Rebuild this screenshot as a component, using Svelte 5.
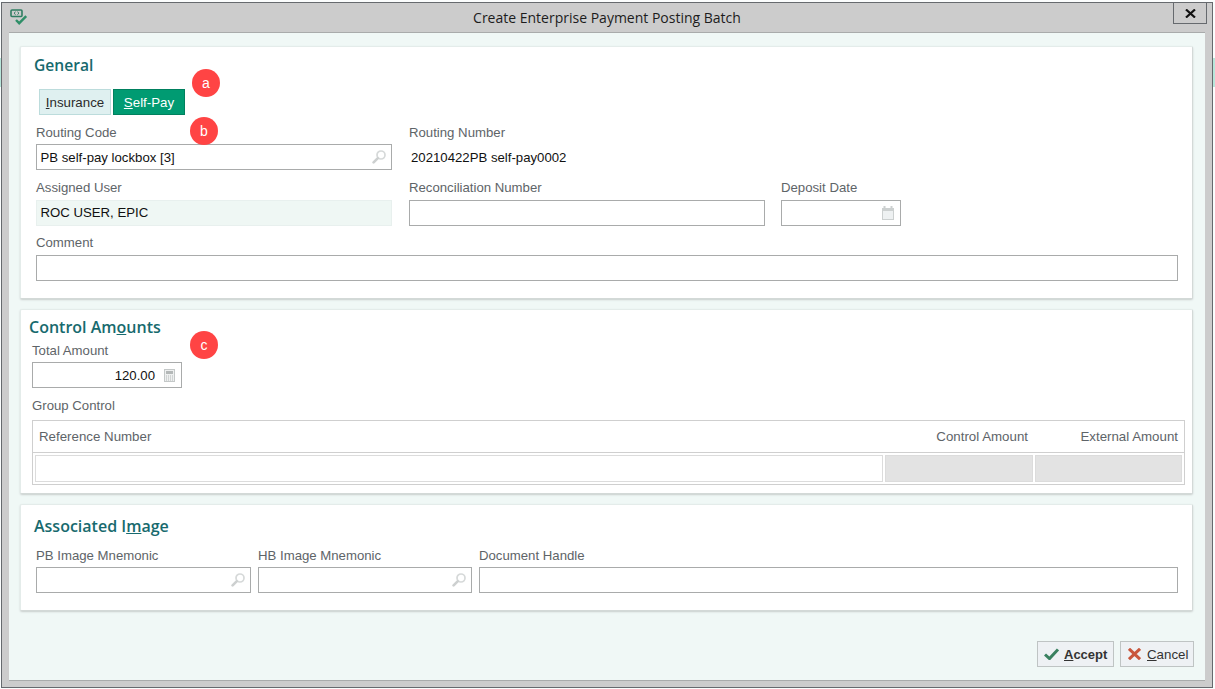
<script>
	const tabs = [
		{ key: 'I', rest: 'nsurance', active: false },
		{ key: 'S', rest: 'elf-Pay', active: true }
	];
</script>

{#snippet searchIcon()}
	<svg class="icon" width="14" height="14" viewBox="0 0 14 14">
		<circle cx="9" cy="5" r="4" fill="none" stroke="#d6d9d9" stroke-width="1.7" />
		<path d="M5.6 8.4 1.6 12.4" stroke="#cdd0d0" stroke-width="2.6" stroke-linecap="round" />
	</svg>
{/snippet}

<div class="backdrop"></div>

<div class="window">
	<header class="titlebar">
		<svg class="app-icon" width="18" height="18" viewBox="0 0 18 18">
			<rect x="1" y="1" width="11" height="6.5" rx="1" fill="none" stroke="#2f7d62" stroke-width="1.6" />
			<path d="M5.6 2.8 4 4.2l1.6 1.5M7.4 2.8 9 4.2 7.4 5.7" fill="none" stroke="#2f7d62" stroke-width="1" />
			<path d="M6 11l3.2 3.2 7-7" fill="none" stroke="#2f8f68" stroke-width="2.4" />
		</svg>
		<span class="title">Create Enterprise Payment Posting Batch</span>
		<button class="close" aria-label="Close">
			<svg width="11" height="9" viewBox="0 0 11 9"><path d="M1 .5 10 8.5M10 .5 1 8.5" stroke="#111" stroke-width="2.2" /></svg>
		</button>
	</header>

	<main class="content">
		<section class="panel general">
			<h2>General</h2>
			<div class="tabs">
				{#each tabs as tab}
					<button class="tab" class:active={tab.active}><u>{tab.key}</u>{tab.rest}</button>
				{/each}
				<span class="badge badge-a">a</span>
			</div>
			<div class="row first">
				<div class="field w356">
					<span class="label">Routing Code</span>
					<div class="input">PB self-pay lockbox [3]{@render searchIcon()}</div>
					<span class="badge badge-b">b</span>
				</div>
				<div class="field w356">
					<span class="label">Routing Number</span>
					<div class="plain">20210422PB self-pay0002</div>
				</div>
			</div>
			<div class="row">
				<div class="field w356">
					<span class="label">Assigned User</span>
					<div class="input readonly">ROC USER, EPIC</div>
				</div>
				<div class="field w356">
					<span class="label">Reconciliation Number</span>
					<div class="input"></div>
				</div>
				<div class="field w120">
					<span class="label">Deposit Date</span>
					<div class="input">
						<svg class="icon cal" width="12" height="14" viewBox="0 0 12 14">
							<path d="M2.5 0v3M9.5 0v3" stroke="#ccd0d0" stroke-width="2" />
							<rect x=".5" y="2.5" width="11" height="11" fill="#eef1f2" stroke="#ccd0d0" />
							<rect x="1" y="2" width="10" height="3" fill="#ccd0d0" />
						</svg>
					</div>
				</div>
			</div>
			<div class="row">
				<div class="field grow">
					<span class="label">Comment</span>
					<div class="input"></div>
				</div>
			</div>
		</section>

		<section class="panel amounts">
			<h2>Control Am<u>o</u>unts</h2>
			<div class="field w150">
				<span class="label">Total Amount</span>
				<div class="input number">
					120.00
					<svg class="icon calc" width="11" height="13" viewBox="0 0 11 13">
						<rect x=".5" y=".5" width="10" height="12" fill="#eef0f0" stroke="#c4c8c8" />
						<rect x="2" y="2" width="7" height="3" fill="#b4b8b8" />
						<path d="M2 7h7M2 9h7M2 11h7" stroke="#b4b8b8" stroke-dasharray="1 1" />
					</svg>
				</div>
				<span class="badge badge-c">c</span>
			</div>
			<span class="label group-label">Group Control</span>
			<div class="table">
				<div class="thead">
					<span class="th-ref">Reference Number</span>
					<span class="th-amt">Control Amount</span>
					<span class="th-ext">External Amount</span>
				</div>
				<div class="tbody">
					<div class="cell col-ref"></div>
					<div class="cell col-amt off"></div>
					<div class="cell col-ext off"></div>
				</div>
			</div>
		</section>

		<section class="panel image">
			<h2>Associated I<u>m</u>age</h2>
			<div class="row">
				<div class="field w215">
					<span class="label">PB Image Mnemonic</span>
					<div class="input">{@render searchIcon()}</div>
				</div>
				<div class="field w214">
					<span class="label">HB Image Mnemonic</span>
					<div class="input">{@render searchIcon()}</div>
				</div>
				<div class="field grow">
					<span class="label">Document Handle</span>
					<div class="input"></div>
				</div>
			</div>
		</section>

		<footer class="actions">
			<button class="action accept">
				<svg width="15" height="12" viewBox="0 0 15 12"><path d="M1 6.5 5.5 10.6 14 1.4" fill="none" stroke="#3a8160" stroke-width="3" /></svg>
				<span class="strong"><u>A</u>ccept</span>
			</button>
			<button class="action cancel">
				<svg width="13" height="12" viewBox="0 0 13 12"><path d="M1 .8 12 11.2M12 .8 1 11.2" stroke="#c9563c" stroke-width="3" /></svg>
				<span><u>C</u>ancel</span>
			</button>
		</footer>
	</main>
</div>

<style>
	:global(body) {
		background: #fbfdfd;
		font-family: 'Liberation Sans', Arial, sans-serif;
	}

	/* app behind the dialog, only its edges show */
	.backdrop {
		position: absolute;
		top: 58px;
		left: 0;
		width: 1215px;
		height: 29px;
		background: #b8e6da;
	}

	.window {
		box-sizing: border-box;
		position: relative;
		display: flex;
		flex-direction: column;
		width: 1212px;
		height: 686px;
		margin: 2px 0 0 1px;
		border: 1px solid #666a6e;
		background: #ccc;
	}

	.titlebar {
		display: flex;
		align-items: flex-start;
		height: 29px;
		flex-shrink: 0;
	}

	.app-icon {
		margin: 6px 0 0 8px;
	}

	.title {
		flex: 1;
		padding: 5px 0 0 13px;
		text-align: center;
		font-family: 'Open Sans', sans-serif;
		font-size: 14px;
		color: #1c1c1c;
	}

	.close {
		display: flex;
		align-items: center;
		justify-content: center;
		width: 34px;
		height: 21px;
		margin-right: 5px;
		padding: 0;
		background: #ccc;
		border: 1px solid #666a6e;
		border-top: none;
	}

	.content {
		flex: 1;
		display: flex;
		flex-direction: column;
		margin: 0 7px 6px 7px;
		padding: 13px 11px 0;
		background: #f0f8f6;
		border-top: 1px solid #a9abab;
		border-bottom: 1px solid #a9abab;
	}

	.panel {
		box-sizing: border-box;
		position: relative;
		width: 1173px;
		background: #fff;
		border: 1px solid #e4ecea;
		border-bottom-color: #d3d9d7;
		border-right-color: #d3d9d7;
		border-radius: 2px;
		box-shadow: 0 1px 2px #c8cecc;
		margin-bottom: 10px;
	}

	.general {
		height: 253px;
		padding: 8px 14px 0 15px;
	}

	.amounts {
		height: 185px;
		padding: 7px 11px 0;
	}

	.image {
		height: 107px;
		padding: 11px 14px 0 15px;
	}

	h2 {
		margin: 0 0 0 -2px;
		font-family: 'Open Sans', sans-serif;
		font-size: 16px;
		font-weight: 600;
		line-height: 20px;
		color: #176a6e;
	}

	.general h2 {
		font-size: 15.6px;
	}

	h2 u {
		text-decoration-thickness: 1px;
	}

	.tabs {
		position: relative;
		display: flex;
		gap: 2px;
		margin: 14px 0 11px 3px;
		height: 26px;
	}

	.tab {
		box-sizing: border-box;
		width: 72px;
		height: 26px;
		padding: 0;
		font: 13.3px 'Liberation Sans', Arial, sans-serif;
		color: #2b2b2b;
		background: #dff0f0;
		border: 1px solid #bcdcdc;
	}

	.tab.active {
		color: #fff;
		background: #009b72;
		border-color: #00805e;
	}

	.badge {
		position: absolute;
		display: flex;
		align-items: center;
		justify-content: center;
		width: 28px;
		height: 28px;
		border-radius: 50%;
		background: #ff4444;
		color: #fff;
		font-size: 14px;
	}

	.badge-a {
		left: 153px;
		top: -20px;
	}

	.badge-b {
		left: 154px;
		top: -9px;
	}

	.badge-c {
		left: 158px;
		top: -13px;
	}

	.row {
		display: flex;
		gap: 17px;
	}

	.general .row {
		margin-bottom: 10.5px;
		height: 45px;
	}

	.general .row.first {
		margin-bottom: 9.5px;
	}

	.first .label {
		margin-bottom: 4px;
	}

	.field {
		position: relative;
		display: flex;
		flex-direction: column;
	}

	.w356 {
		width: 356px;
	}

	.w120 {
		width: 120px;
		margin-left: -1px;
	}

	.w150 {
		width: 150px;
	}

	.w215 {
		width: 215px;
	}

	.w214 {
		width: 214px;
	}

	.grow {
		flex: 1;
	}

	.label {
		font-size: 13.2px;
		line-height: 14px;
		margin-bottom: 5px;
		color: #5e6468;
		white-space: nowrap;
	}

	.input {
		box-sizing: border-box;
		display: flex;
		align-items: center;
		flex-shrink: 0;
		height: 26px;
		padding: 0 4px 0 3.5px;
		font-size: 13.2px;
		color: #111;
		background: #fff;
		border: 1px solid #a9abab;
	}

	.input.readonly {
		background: #eff7f4;
		border: 1px solid #e8f0ee;
	}

	.input.number {
		justify-content: flex-end;
		gap: 9px;
	}

	.icon {
		margin-left: auto;
		margin-right: 1px;
		flex-shrink: 0;
	}

	.calc {
		margin-left: 0;
		margin-right: 2px;
	}

	.cal {
		margin-right: 2px;
	}

	.plain {
		display: flex;
		align-items: center;
		height: 26px;
		padding-left: 2px;
		font-size: 13.2px;
		color: #111;
	}

	.amounts h2 {
		margin: 0 0 7px -3px;
	}

	.amounts .field .label {
		margin-bottom: 4px;
	}

	.group-label {
		display: block;
		margin: 11px 0 7px;
	}

	.table {
		box-sizing: border-box;
		width: 1153px;
		height: 65px;
		border: 1px solid #cfcfcf;
	}

	.thead {
		display: flex;
		align-items: center;
		height: 31px;
		font-size: 13.3px;
		color: #5e6468;
		border-bottom: 1px solid #cfcfcf;
	}

	.th-ref {
		box-sizing: border-box;
		width: 850px;
		padding-left: 6px;
	}

	.th-amt,
	.th-ext {
		box-sizing: border-box;
		padding-right: 6px;
		text-align: right;
	}

	.th-amt {
		width: 151px;
	}

	.th-ext {
		width: 150px;
	}

	.tbody {
		display: flex;
		gap: 2px;
		padding: 2px 2px 0;
	}

	.col-ref {
		width: 848px;
	}

	.col-amt {
		width: 148px;
	}

	.col-ext {
		width: 147px;
	}

	.cell {
		box-sizing: border-box;
		height: 27px;
		border: 1px solid #dcdcdc;
	}

	.cell.off {
		background: #e3e3e3;
	}

	.image h2 {
		margin-bottom: 13px;
	}

	.image .label {
		margin-bottom: 4px;
	}

	.image .row {
		gap: 7px;
	}

	.actions {
		display: flex;
		justify-content: flex-end;
		gap: 6px;
		margin-top: 20px;
	}

	.action {
		box-sizing: border-box;
		display: flex;
		align-items: center;
		height: 26px;
		padding: 0;
		font: 13.3px 'Liberation Sans', Arial, sans-serif;
		color: #333;
		background: #eef1f4;
		border: 1px solid #bfc4c4;
	}

	.accept {
		width: 77px;
		padding-left: 6px;
		gap: 5px;
	}

	.cancel {
		width: 74px;
		padding-left: 7px;
		gap: 6px;
	}

	.strong {
		font-weight: 700;
		font-size: 13px;
	}
</style>
